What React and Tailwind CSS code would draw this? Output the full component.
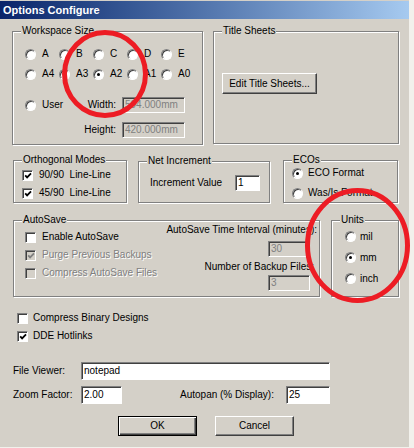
import React from 'react';

const Group = ({ label, className = '', children }) => (
  <div className={`relative shrink-0 border border-[#808080] shadow-[inset_1px_1px_0_#fff,1px_1px_0_#fff] ${className}`}>
    <span className="absolute left-[8px] top-[-7px] bg-[#d4d0c8] px-[1px] leading-[12px]">{label}</span>
    {children}
  </div>
);

const Radio = ({ checked }) => (
  <span className="relative inline-block h-[11px] w-[11px] shrink-0 rounded-full border border-t-[#808080] border-l-[#808080] border-b-white border-r-white bg-white shadow-[inset_1px_1px_0_#404040]">
    {checked && <span className="absolute left-[3px] top-[3px] h-[3px] w-[3px] rounded-full bg-black" />}
  </span>
);

const Check = ({ checked, disabled }) => (
  <span
    className={`relative inline-block h-[11px] w-[11px] shrink-0 border border-t-[#808080] border-l-[#808080] border-b-white border-r-white shadow-[inset_1px_1px_0_#404040] ${
      disabled ? 'bg-[#d4d0c8]' : 'bg-white'
    }`}
  >
    {checked && (
      <svg className="absolute left-[1px] top-[1px]" width="8" height="8" viewBox="0 0 8 8">
        <path d="M1.2 3.4 L3.1 5.4 L7 1.3" fill="none" stroke={disabled ? '#808080' : '#000'} strokeWidth="1.8" />
      </svg>
    )}
  </span>
);

const Field = ({ value, disabled, className = '' }) => (
  <div
    className={`flex shrink-0 items-center border border-t-[#808080] border-l-[#808080] border-b-white border-r-white pl-[2px] shadow-[inset_1px_1px_0_#404040] ${
      disabled ? 'bg-[#d4d0c8] text-[#808080]' : 'bg-white'
    } ${className}`}
  >
    {value}
  </div>
);

const Btn = ({ children, isDefault, className = '' }) => (
  <button
    className={`flex shrink-0 items-center justify-center ${
      isDefault
        ? 'border border-black shadow-[inset_1px_1px_0_#fff,inset_-1px_-1px_0_#404040,inset_-2px_-2px_0_#808080]'
        : 'border border-t-white border-l-white border-b-[#404040] border-r-[#404040] shadow-[inset_-1px_-1px_0_#808080]'
    } ${className}`}
  >
    {children}
  </button>
);

const dim = 'text-[#808080] [text-shadow:1px_1px_0_#fff]';

const sizes = [
  ['A', 'B', 'C', 'D', 'E'],
  ['A4', 'A3', 'A2', 'A1', 'A0'],
];

export default function App() {
  return (
    <div className="relative h-[448px] w-[414px] overflow-hidden bg-[#f2f1ec] font-['Liberation_Sans',Arial,sans-serif] text-[10px] leading-[12px] text-black">
      <div className="flex h-[447px] w-[409px] flex-col bg-[#d4d0c8]">
        <div className="mt-[1px] flex h-[18px] items-center bg-linear-to-r from-[#0a246a] to-[#a6caf0] pl-[3px] text-[11px] font-bold text-white">
          Options Configure
        </div>

        {/* row 1 */}
        <div className="ml-[12px] mt-[12px] flex gap-[10px]">
          <Group label="Workspace Size" className="h-[114px] w-[191px]">
            <div className="pl-[12px] pt-[12px]">
              {sizes.map((row, r) => (
                <div key={r} className="flex h-[20px] items-center">
                  {row.map((s) => (
                    <div key={s} className="flex w-[34px] items-center gap-[6px]">
                      <Radio checked={s === 'A2'} />
                      <span>{s}</span>
                    </div>
                  ))}
                </div>
              ))}
              <div className="mt-[13px] grid grid-cols-[44px_41px_63px] grid-rows-[16px_16px] gap-x-[6px] gap-y-[9px]">
                <div className="flex items-center gap-[6px]">
                  <Radio />
                  <span>User</span>
                </div>
                <div className="flex items-center justify-end">Width:</div>
                <Field value="594.000mm" disabled className="h-[16px]" />
                <div />
                <div className="flex items-center justify-end">Height:</div>
                <Field value="420.000mm" disabled className="h-[16px]" />
              </div>
            </div>
          </Group>
          <Group label="Title Sheets" className="h-[113px] w-[186px]">
            <Btn className="ml-[8px] mt-[41px] h-[21px] w-[95px]">Edit Title Sheets...</Btn>
          </Group>
        </div>

        {/* row 2 */}
        <div className="ml-[13px] mt-[15px] flex">
          <Group label="Orthogonal Modes" className="h-[43px] w-[114px]">
            <div className="pl-[8px] pt-[5px]">
              <div className="flex h-[18px] items-center gap-[6px] whitespace-pre">
                <Check checked />
                <span>90/90  Line-Line</span>
              </div>
              <div className="flex h-[18px] items-center gap-[6px] whitespace-pre">
                <Check checked />
                <span>45/90  Line-Line</span>
              </div>
            </div>
          </Group>
          <Group label="Net Increment" className="ml-[11px] mt-[1px] h-[42px] w-[132px]">
            <div className="flex items-center pl-[11px] pt-[13px]">
              <span className="w-[85px]">Increment Value</span>
              <Field value="1" className="h-[16px] w-[25px]" />
            </div>
          </Group>
          <Group label="ECOs" className="ml-[13px] h-[43px] w-[115px]">
            <div className="pl-[8px] pt-[2px]">
              <div className="flex h-[20px] items-center gap-[5px]">
                <Radio checked />
                <span>ECO Format</span>
              </div>
              <div className="flex h-[20px] items-center gap-[5px]">
                <Radio />
                <span>Was/Is Format</span>
              </div>
            </div>
          </Group>
        </div>

        {/* row 3 */}
        <div className="ml-[13px] mt-[17px] flex">
          <Group label="AutoSave" className="h-[77px] w-[307px]">
            <div className="flex">
              <div className="pl-[11px] pt-[7px]">
                <div className="flex h-[18px] items-center gap-[6px]">
                  <Check />
                  <span>Enable AutoSave</span>
                </div>
                <div className="flex h-[18px] items-center gap-[6px]">
                  <Check checked disabled />
                  <span className={dim}>Purge Previous Backups</span>
                </div>
                <div className="flex h-[18px] items-center gap-[6px]">
                  <Check disabled />
                  <span className={dim}>Compress AutoSave Files</span>
                </div>
              </div>
              <div className="ml-auto flex flex-col items-end pr-[2px] pt-[3px]">
                <span>AutoSave Time Interval (minutes):</span>
                <Field value="30" disabled className="mr-[7px] mt-[5px] h-[16px] w-[42px]" />
                <span className="mr-[3px] mt-[4px]">Number of Backup Files:</span>
                <Field value="3" disabled className="mr-[7px] mt-[2px] h-[16px] w-[42px]" />
              </div>
            </div>
          </Group>
          <Group label="Units" className="ml-[11px] h-[77px] w-[68px]">
            <div className="pl-[13px] pt-[5px]">
              {['mil', 'mm', 'inch'].map((u) => (
                <div key={u} className="flex h-[21px] items-center gap-[4px]">
                  <Radio checked={u === 'mm'} />
                  <span>{u}</span>
                </div>
              ))}
            </div>
          </Group>
        </div>

        {/* options */}
        <div className="ml-[17px] mt-[12px]">
          <div className="flex h-[18px] items-center gap-[5px]">
            <Check />
            <span>Compress Binary Designs</span>
          </div>
          <div className="flex h-[18px] items-center gap-[5px]">
            <Check checked />
            <span>DDE Hotlinks</span>
          </div>
        </div>

        <div className="ml-[13px] mt-[17px] flex items-center">
          <span className="w-[68px]">File Viewer:</span>
          <Field value="notepad" className="h-[18px] w-[249px]" />
        </div>
        <div className="ml-[13px] mt-[6px] flex items-center">
          <span className="w-[68px]">Zoom Factor:</span>
          <Field value="2.00" className="h-[18px] w-[41px]" />
          <span className="ml-[58px] w-[106px]">Autopan (% Display):</span>
          <Field value="25" className="h-[18px] w-[44px]" />
        </div>

        <div className="ml-[118px] mt-[12px] flex gap-[18px]">
          <Btn isDefault className="h-[20px] w-[79px]">OK</Btn>
          <Btn className="h-[20px] w-[79px]">Cancel</Btn>
        </div>
      </div>

      <svg className="pointer-events-none absolute left-0 top-0" width="414" height="448">
        <ellipse cx="105" cy="74" rx="40.5" ry="41.5" fill="none" stroke="#ed1c24" strokeWidth="5" />
        <ellipse cx="357.5" cy="245.5" rx="50" ry="55" fill="none" stroke="#ed1c24" strokeWidth="5" />
      </svg>
    </div>
  );
}
